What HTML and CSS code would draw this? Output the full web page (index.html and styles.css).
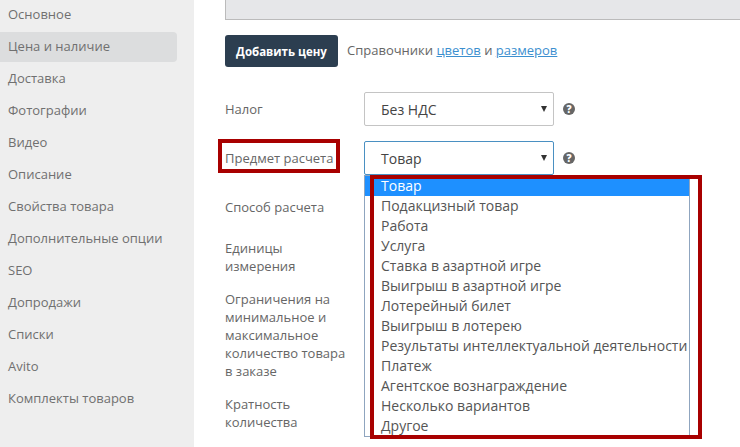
FILE: index.html
```html
<!DOCTYPE html>
<html lang="ru">
<head>
<meta charset="utf-8">
<title>Цена и наличие</title>
<link rel="stylesheet" href="styles.css">
</head>
<body>
<div class="page">
  <nav class="side">
    <a class="side-item">Основное</a>
    <a class="side-item active">Цена и наличие</a>
    <a class="side-item">Доставка</a>
    <a class="side-item">Фотографии</a>
    <a class="side-item">Видео</a>
    <a class="side-item">Описание</a>
    <a class="side-item">Свойства товара</a>
    <a class="side-item">Дополнительные опции</a>
    <a class="side-item">SEO</a>
    <a class="side-item">Допродажи</a>
    <a class="side-item">Списки</a>
    <a class="side-item">Avito</a>
    <a class="side-item">Комплекты товаров</a>
  </nav>
  <main class="main">
    <div class="top-box"></div>
    <div class="actions">
      <button class="btn">Добавить цену</button>
      <span class="refs">Справочники <a class="link">цветов</a> и <a class="link">размеров</a></span>
    </div>
    <div class="form">
      <div class="row">
        <label class="label">Налог</label>
        <div class="select"><span>Без НДС</span><i class="caret"></i></div>
        <span class="help">?</span>
      </div>
      <div class="row">
        <label class="label">Предмет расчета</label>
        <div class="select focus"><span>Товар</span><i class="caret"></i></div>
        <span class="help">?</span>
      </div>
      <div class="row tall"><label class="label">Способ расчета</label></div>
      <div class="row"><label class="label">Единицы<br>измерения</label></div>
      <div class="row"><label class="label">Ограничения на минимальное и максимальное количество товара в заказе</label></div>
      <div class="row"><label class="label">Кратность<br>количества</label></div>
    </div>
  </main>
  <ul class="dropdown">
    <li class="opt selected">Товар</li>
    <li class="opt">Подакцизный товар</li>
    <li class="opt">Работа</li>
    <li class="opt">Услуга</li>
    <li class="opt">Ставка в азартной игре</li>
    <li class="opt">Выигрыш в азартной игре</li>
    <li class="opt">Лотерейный билет</li>
    <li class="opt">Выигрыш в лотерею</li>
    <li class="opt">Результаты интеллектуальной деятельности</li>
    <li class="opt">Платеж</li>
    <li class="opt">Агентское вознаграждение</li>
    <li class="opt">Несколько вариантов</li>
    <li class="opt">Другое</li>
  </ul>
  <div class="mark mark-label"></div>
  <div class="mark mark-list"></div>
</div>
</body>
</html>
```
FILE: styles.css
```css
* { box-sizing: border-box; }
html, body { margin: 0; padding: 0; }
body { font-family: "Open Sans", "Noto Sans", sans-serif; font-size: 13px; color: #666; background: #fff; }
.page { position: relative; display: flex; width: 740px; height: 447px; overflow: hidden; }

.side { flex: 0 0 194px; display: flex; flex-direction: column; gap: 2px; background: #eee; }
.side-item { display: flex; align-items: center; height: 30px; width: 177px; padding: 0 0 2px 8px; color: #707070; white-space: nowrap; border-radius: 0 4px 4px 0; }
.side-item.active { background: #dcddde; }

.main { flex: 1; padding-left: 31px; }
.top-box { height: 20px; background: #e6e7e9; border-left: 1px solid #bbb; border-bottom: 1px solid #bbb; }
.actions { display: flex; align-items: center; gap: 9px; margin-top: 15px; }
.btn { width: 113px; height: 32px; padding: 0; border: 0; border-radius: 3px; background: #2c3e50; color: #fff; font: 700 11.5px "Open Sans", sans-serif; }
.refs { color: #666; position: relative; top: -1px; }
.link { color: #3c8fcf; text-decoration: underline; }

.form { display: flex; flex-direction: column; gap: 15px; margin-top: 25px; }
.row { display: flex; align-items: center; min-height: 34px; }
.label { flex: 0 0 auto; width: 124px; margin-right: 15px; line-height: 18px; color: #666; }
.select { position: relative; display: flex; align-items: center; width: 190px; height: 34px; padding: 0 16px; background: #fff; border: 1px solid #c4c4c4; border-radius: 2px; color: #444; font-size: 14px; }
.select.focus { border-color: #4a90c2; }
.caret { position: absolute; right: 6px; top: 13px; border-left: 3px solid transparent; border-right: 3px solid transparent; border-top: 6px solid #333; }
.help { display: flex; align-items: center; justify-content: center; width: 12px; height: 12px; margin-left: 9px; border-radius: 50%; background: #666; color: #fff; font-size: 10px; font-weight: 800; line-height: 1; }

.dropdown { position: absolute; left: 364px; top: 175px; width: 326px; height: 262px; margin: 0; padding: 0; list-style: none; background: #fff; border: 1px solid #8fa5bf; }
.opt { height: 20px; padding-left: 16px; line-height: 20px; font-size: 14px; color: #555; white-space: nowrap; }
.opt.selected { background: #1e90ff; color: #fff; }

.mark { position: absolute; border: 4px solid #a80000; }
.mark-label { left: 218px; top: 139px; width: 122px; height: 34px; }
.mark-list { left: 370px; top: 175px; width: 332px; height: 264px; }
```
